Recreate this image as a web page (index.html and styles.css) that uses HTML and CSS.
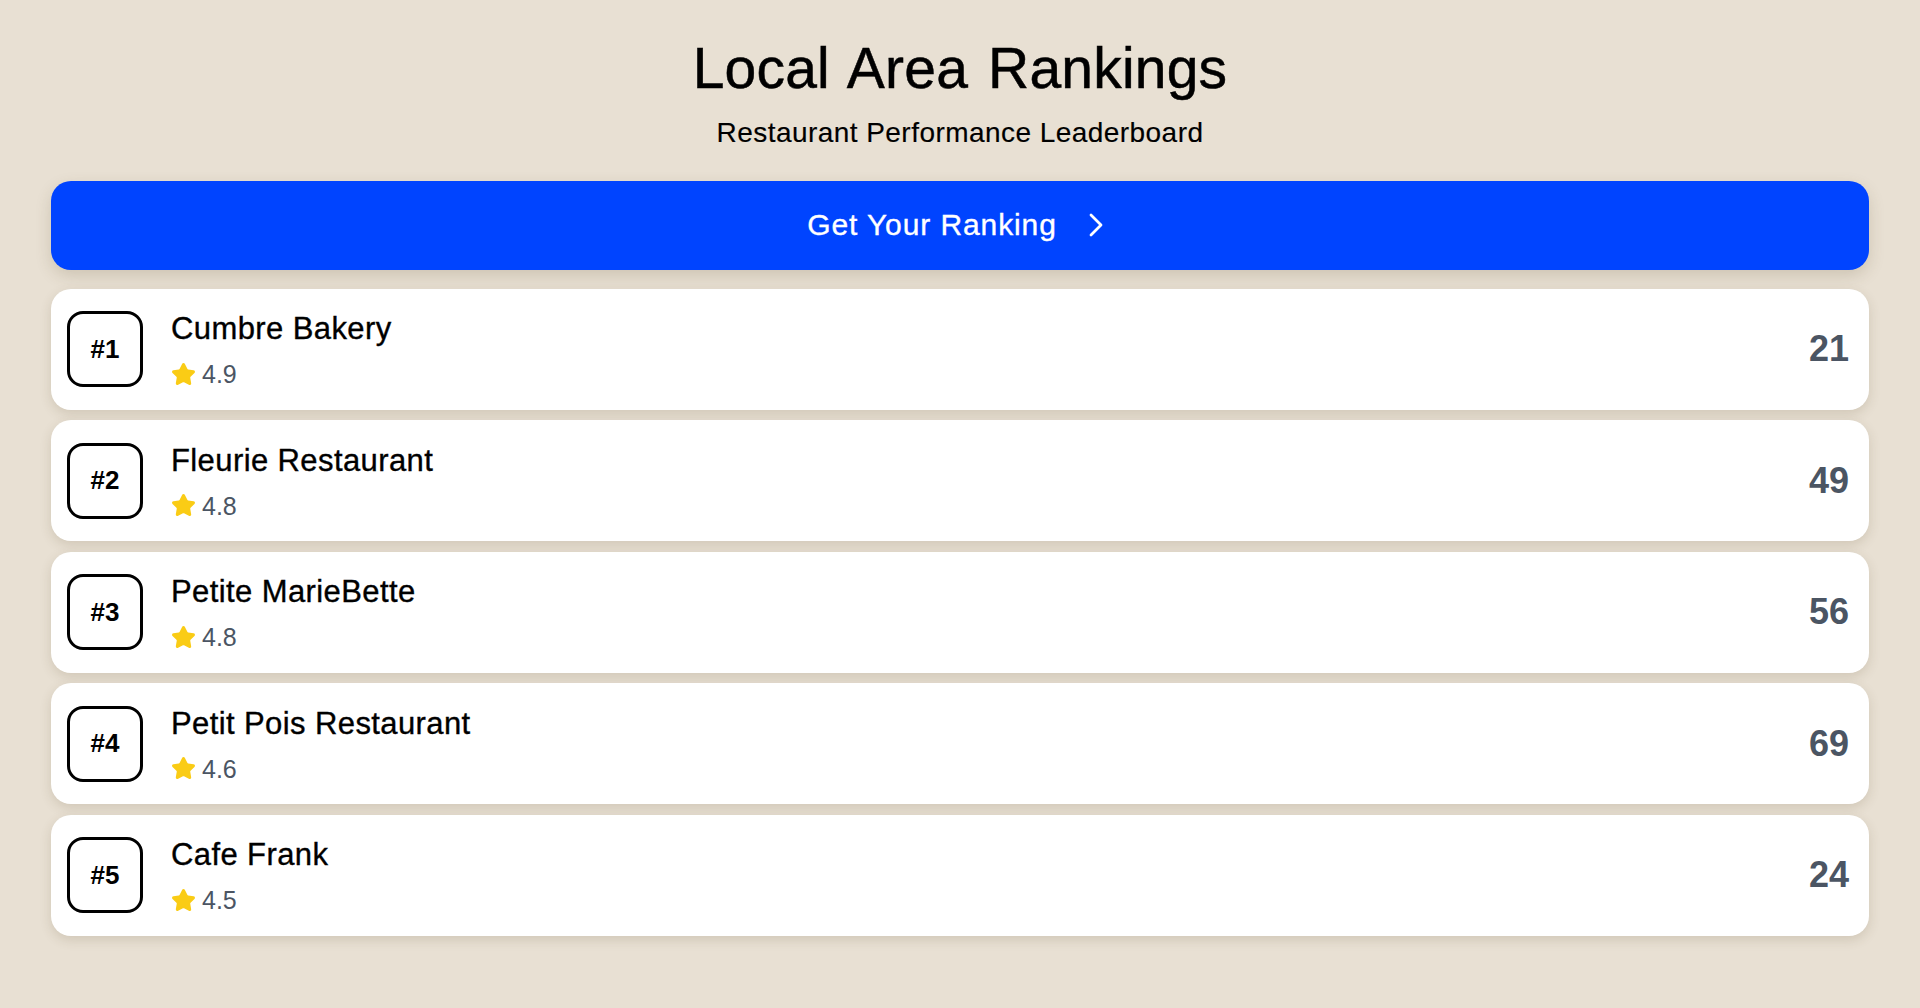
FILE: index.html
```html
<!DOCTYPE html>
<html lang="en">
<head>
<meta charset="utf-8">
<title>Local Area Rankings</title>
<link rel="stylesheet" href="styles.css">
</head>
<body>
<main class="page">
  <header class="header">
    <h1 class="title">Local Area Rankings</h1>
    <p class="subtitle">Restaurant Performance Leaderboard</p>
  </header>

  <button class="cta" type="button">
    <span>Get Your Ranking</span>
    <svg class="chevron" viewBox="0 0 24 24" width="24" height="24" aria-hidden="true"><path d="M2 2 L12 12 L2 22" fill="none" stroke="#fff" stroke-width="2.8" stroke-linecap="round" stroke-linejoin="round"/></svg>
  </button>

  <ol class="list">
    <li class="card">
      <div class="badge">#1</div>
      <div class="info">
        <div class="name">Cumbre Bakery</div>
        <div class="rating"><svg class="star" viewBox="0 0 24 24" aria-hidden="true"><path d="M11.525 2.295a.53.53 0 0 1 .95 0l2.31 4.679a2.123 2.123 0 0 0 1.595 1.16l5.166.756a.53.53 0 0 1 .294.904l-3.736 3.638a2.123 2.123 0 0 0-.611 1.878l.882 5.14a.53.53 0 0 1-.771.56l-4.618-2.428a2.122 2.122 0 0 0-1.973 0L6.396 21.01a.53.53 0 0 1-.77-.56l.881-5.139a2.122 2.122 0 0 0-.611-1.879L2.160 9.795a.53.53 0 0 1 .294-.906l5.165-.755a2.122 2.122 0 0 0 1.597-1.16z"/></svg><span>4.9</span></div>
      </div>
      <div class="score">21</div>
    </li>
    <li class="card">
      <div class="badge">#2</div>
      <div class="info">
        <div class="name">Fleurie Restaurant</div>
        <div class="rating"><svg class="star" viewBox="0 0 24 24" aria-hidden="true"><path d="M11.525 2.295a.53.53 0 0 1 .95 0l2.31 4.679a2.123 2.123 0 0 0 1.595 1.16l5.166.756a.53.53 0 0 1 .294.904l-3.736 3.638a2.123 2.123 0 0 0-.611 1.878l.882 5.14a.53.53 0 0 1-.771.56l-4.618-2.428a2.122 2.122 0 0 0-1.973 0L6.396 21.01a.53.53 0 0 1-.77-.56l.881-5.139a2.122 2.122 0 0 0-.611-1.879L2.160 9.795a.53.53 0 0 1 .294-.906l5.165-.755a2.122 2.122 0 0 0 1.597-1.16z"/></svg><span>4.8</span></div>
      </div>
      <div class="score">49</div>
    </li>
    <li class="card">
      <div class="badge">#3</div>
      <div class="info">
        <div class="name">Petite MarieBette</div>
        <div class="rating"><svg class="star" viewBox="0 0 24 24" aria-hidden="true"><path d="M11.525 2.295a.53.53 0 0 1 .95 0l2.31 4.679a2.123 2.123 0 0 0 1.595 1.16l5.166.756a.53.53 0 0 1 .294.904l-3.736 3.638a2.123 2.123 0 0 0-.611 1.878l.882 5.14a.53.53 0 0 1-.771.56l-4.618-2.428a2.122 2.122 0 0 0-1.973 0L6.396 21.01a.53.53 0 0 1-.77-.56l.881-5.139a2.122 2.122 0 0 0-.611-1.879L2.160 9.795a.53.53 0 0 1 .294-.906l5.165-.755a2.122 2.122 0 0 0 1.597-1.16z"/></svg><span>4.8</span></div>
      </div>
      <div class="score">56</div>
    </li>
    <li class="card">
      <div class="badge">#4</div>
      <div class="info">
        <div class="name">Petit Pois Restaurant</div>
        <div class="rating"><svg class="star" viewBox="0 0 24 24" aria-hidden="true"><path d="M11.525 2.295a.53.53 0 0 1 .95 0l2.31 4.679a2.123 2.123 0 0 0 1.595 1.16l5.166.756a.53.53 0 0 1 .294.904l-3.736 3.638a2.123 2.123 0 0 0-.611 1.878l.882 5.14a.53.53 0 0 1-.771.56l-4.618-2.428a2.122 2.122 0 0 0-1.973 0L6.396 21.01a.53.53 0 0 1-.77-.56l.881-5.139a2.122 2.122 0 0 0-.611-1.879L2.160 9.795a.53.53 0 0 1 .294-.906l5.165-.755a2.122 2.122 0 0 0 1.597-1.16z"/></svg><span>4.6</span></div>
      </div>
      <div class="score">69</div>
    </li>
    <li class="card">
      <div class="badge">#5</div>
      <div class="info">
        <div class="name">Cafe Frank</div>
        <div class="rating"><svg class="star" viewBox="0 0 24 24" aria-hidden="true"><path d="M11.525 2.295a.53.53 0 0 1 .95 0l2.31 4.679a2.123 2.123 0 0 0 1.595 1.16l5.166.756a.53.53 0 0 1 .294.904l-3.736 3.638a2.123 2.123 0 0 0-.611 1.878l.882 5.14a.53.53 0 0 1-.771.56l-4.618-2.428a2.122 2.122 0 0 0-1.973 0L6.396 21.01a.53.53 0 0 1-.77-.56l.881-5.139a2.122 2.122 0 0 0-.611-1.879L2.160 9.795a.53.53 0 0 1 .294-.906l5.165-.755a2.122 2.122 0 0 0 1.597-1.16z"/></svg><span>4.5</span></div>
      </div>
      <div class="score">24</div>
    </li>
  </ol>
</main>
</body>
</html>
```

FILE: styles.css
```css
* { box-sizing: border-box; }

html, body {
  margin: 0;
  padding: 0;
  background: #e8e0d3;
  font-family: "Liberation Sans", Arial, sans-serif;
  color: #000;
}

.page {
  padding: 34px 51px 40px;
  display: flex;
  flex-direction: column;
}

.header {
  display: flex;
  flex-direction: column;
  align-items: center;
  gap: 14px;
}

.title {
  margin: 0;
  font-size: 57px;
  line-height: 1.2;
  font-weight: 500;
  letter-spacing: 0.2px;
  word-spacing: 4px;
  -webkit-text-stroke: 0.5px currentColor;
}

.subtitle {
  margin: 0;
  font-size: 28px;
  line-height: 1.2;
  font-weight: 400;
  letter-spacing: 0.45px;
  -webkit-text-stroke: 0.15px currentColor;
}

.cta {
  margin-top: 31px;
  height: 89px;
  border: none;
  border-radius: 20px;
  background: #0044ff;
  color: #fff;
  font-family: inherit;
  font-size: 30px;
  font-weight: 500;
  letter-spacing: 0.9px;
  display: flex;
  align-items: center;
  justify-content: center;
  gap: 32px;
  box-shadow: 0 6px 16px rgba(90, 70, 40, 0.18);
  cursor: pointer;
  -webkit-text-stroke: 0.35px currentColor;
}

.chevron {
  width: 24px;
  height: 24px;
  display: block;
}

.list {
  list-style: none;
  margin: 19px 0 0;
  padding: 0;
  display: flex;
  flex-direction: column;
  gap: 10.5px;
}

.card {
  background: #fff;
  border-radius: 20px;
  height: 121px;
  padding: 0 20px 0 16px;
  display: flex;
  align-items: center;
  gap: 28px;
  box-shadow: 0 4px 12px rgba(90, 70, 40, 0.16);
}

.badge {
  width: 76px;
  height: 76px;
  flex: none;
  border: 3px solid #000;
  border-radius: 16px;
  display: flex;
  align-items: center;
  justify-content: center;
  font-size: 26px;
  font-weight: 700;
}

.info {
  flex: 1;
  display: flex;
  flex-direction: column;
  gap: 11px;
  padding-top: 3px;
}

.name {
  font-size: 31px;
  line-height: 36px;
  font-weight: 500;
  letter-spacing: 0.4px;
  -webkit-text-stroke: 0.35px currentColor;
}

.rating {
  display: flex;
  align-items: center;
  gap: 6px;
  font-size: 25px;
  line-height: 32px;
  color: #4b5563;
}

.star {
  width: 25px;
  height: 25px;
  fill: #facc15;
  stroke: #facc15;
  stroke-width: 2;
  stroke-linejoin: round;
}

.score {
  font-size: 36px;
  font-weight: 700;
  color: #4b5563;
}
```
